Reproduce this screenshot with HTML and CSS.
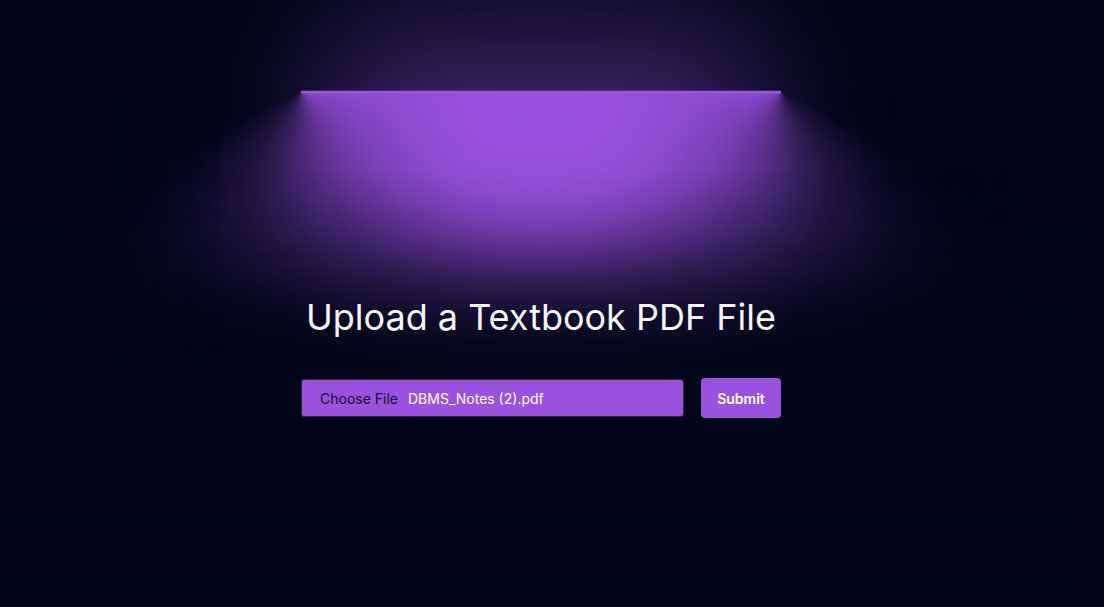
FILE: index.html
```html
<!DOCTYPE html>
<html lang="en">
<head>
<meta charset="utf-8">
<title>Upload a Textbook PDF File</title>
<link rel="stylesheet" href="styles.css">
</head>
<body>
<main class="stage">
  <div class="lamp" aria-hidden="true">
    <div class="cone cone-left">
      <div class="mask mask-bottom"></div>
      <div class="mask mask-side-left"></div>
    </div>
    <div class="cone cone-right">
      <div class="mask mask-side-right"></div>
      <div class="mask mask-bottom"></div>
    </div>
    <div class="shade"></div>
    <div class="glow glow-wide"></div>
    <div class="glow glow-core"></div>
    <div class="bar"></div>
    <div class="cover"></div>
  </div>

  <section class="content">
    <h1 class="title">Upload a Textbook PDF File</h1>
    <form class="upload-form">
      <label class="file-field">
        <span class="file-btn">Choose File</span>
        <span class="file-name">DBMS_Notes (2).pdf</span>
      </label>
      <button type="button" class="submit">Submit</button>
    </form>
  </section>
</main>
</body>
</html>
```

FILE: styles.css
```css
* { box-sizing: border-box; }

html, body {
  margin: 0;
  height: 100%;
  background: #020617;
}

body {
  font-family: Inter, "Noto Sans", "Liberation Sans", sans-serif;
  overflow: hidden;
}

.stage {
  position: relative;
  width: calc(100% - 22px);
  height: 100%;
  display: flex;
  flex-direction: column;
  align-items: center;
  isolation: isolate;
  overflow: hidden;
}

/* ---------- lamp (decorative layer) ---------- */
.lamp {
  position: absolute;
  top: 0;
  left: 0;
  right: 0;
  height: 464px;
  display: flex;
  align-items: center;
  justify-content: center;
  transform: scaleY(1.25);
  isolation: isolate;
  z-index: 0;
}

.lamp > div { position: absolute; }

.cone {
  height: 224px;
  width: 480px;
  overflow: visible;
}

.cone-left {
  right: 50%;
  background-image: conic-gradient(from 70deg at center top, #9b51e0, transparent, transparent);
}

.cone-right {
  left: 50%;
  background-image: conic-gradient(from 290deg at center top, transparent, transparent, #9b51e0);
}

.mask {
  position: absolute;
  background: #020617;
  bottom: 0;
  z-index: 20;
}

.mask-bottom {
  width: 100%;
  height: 160px;
  left: 0;
  -webkit-mask-image: linear-gradient(to top, #fff, transparent);
  mask-image: linear-gradient(to top, #fff, transparent);
}

.cone-right .mask-bottom { left: auto; right: 0; }

.mask-side-left {
  width: 160px;
  height: 100%;
  left: 0;
  -webkit-mask-image: linear-gradient(to right, #fff, transparent);
  mask-image: linear-gradient(to right, #fff, transparent);
}

.mask-side-right {
  width: 160px;
  height: 100%;
  right: 0;
  -webkit-mask-image: linear-gradient(to left, #fff, transparent);
  mask-image: linear-gradient(to left, #fff, transparent);
}

.shade {
  top: 50%;
  height: 192px;
  width: 100%;
  transform: translateY(48px) scaleX(1.5);
  background: #020617;
  filter: blur(40px);
}

.glow { border-radius: 9999px; }

.glow-wide {
  z-index: 50;
  height: 144px;
  width: 448px;
  transform: translateY(-50%);
  background: #9b51e0;
  opacity: 0.5;
  filter: blur(64px);
}

.glow-core {
  z-index: 30;
  height: 144px;
  width: 256px;
  transform: translateY(-96px);
  background: #9d54e2;
  filter: blur(40px);
}

.bar {
  z-index: 50;
  height: 2px;
  width: 480px;
  transform: translateY(-112px);
  background: #9c54e1;
}

.cover {
  z-index: 40;
  height: 176px;
  width: 100%;
  transform: translateY(-200px);
  background: #020617;
}

/* ---------- content ---------- */
.content {
  position: relative;
  z-index: 50;
  display: flex;
  flex-direction: column;
  align-items: center;
  padding: 297px 20px 0;
}

.title {
  margin: 0;
  font-size: 36px;
  line-height: 40px;
  font-weight: 400;
  color: #f5f5f7;
  letter-spacing: 0;
}

.upload-form {
  margin-top: 41px;
  width: 480px;
  display: flex;
  align-items: center;
  gap: 17px;
}

.file-field {
  flex: 1;
  height: 38px;
  display: flex;
  align-items: center;
  gap: 10px;
  padding: 0 18px;
  background: #9b51e0;
  border: 1px solid #2b2640;
  border-radius: 3px;
  font-size: 14px;
  cursor: pointer;
}

.file-btn { color: #17112a; }

.file-name { color: #ffffff; }

.submit {
  width: 80px;
  height: 40px;
  border: 0;
  border-radius: 4px;
  background: #9b51e0;
  color: #ffffff;
  font-family: inherit;
  font-size: 14px;
  font-weight: 600;
  cursor: pointer;
}
```
